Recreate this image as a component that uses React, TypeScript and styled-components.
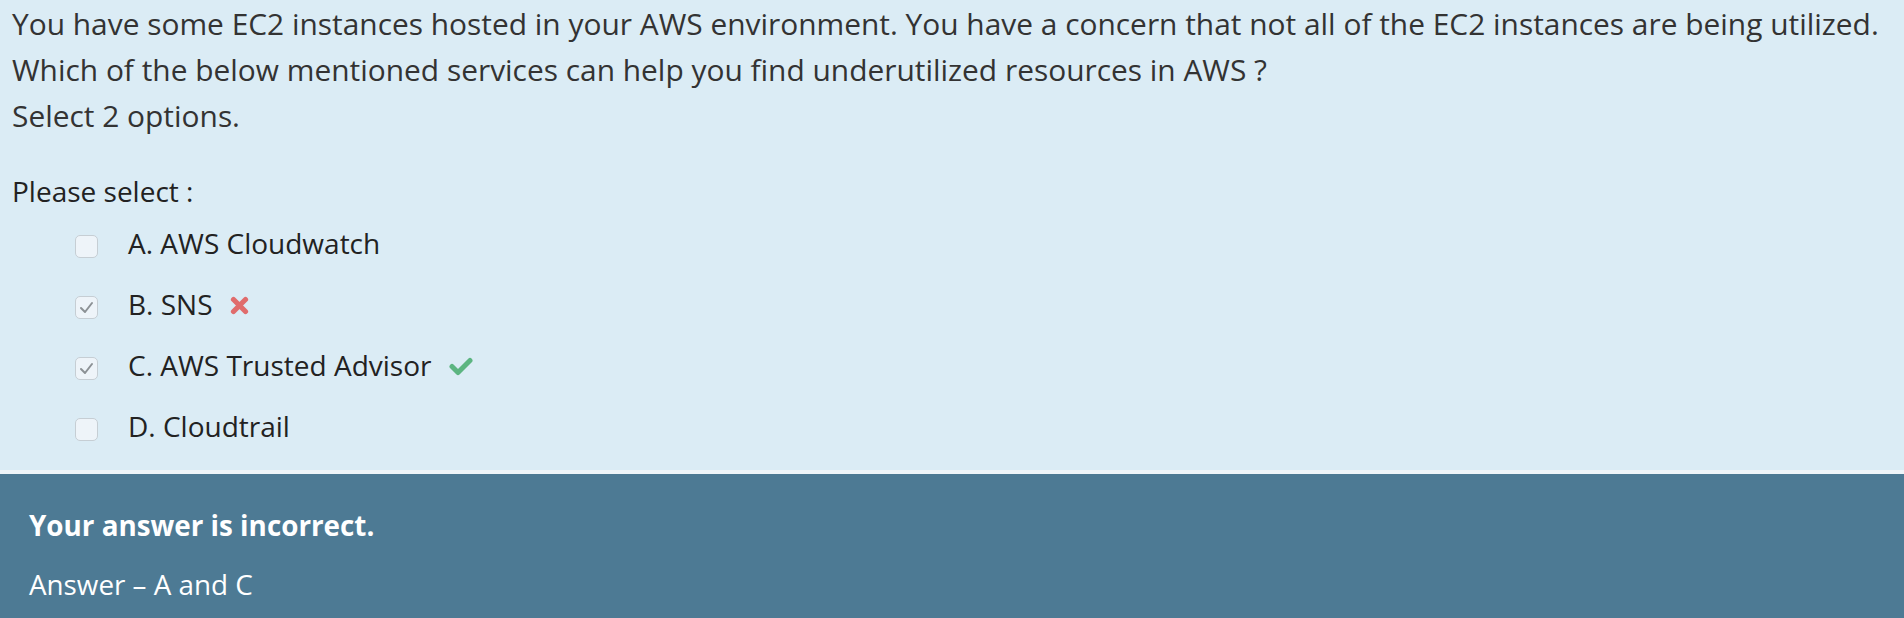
import styled, { createGlobalStyle } from 'styled-components';

const GlobalStyle = createGlobalStyle`
  body {
    margin: 0;
    background-color: #dbecf5;
    font-family: 'Open Sans', 'Noto Sans', sans-serif;
    color: #333333;
  }
`;

const QuestionPanel = styled.div`
  background-color: #dbecf5;
  padding: 1px 12px 21px 12px;
`;

const QuestionText = styled.div`
  font-size: 29.9px;
  line-height: 46px;
  white-space: nowrap;
`;

const SelectLabel = styled.div`
  font-size: 28px;
  line-height: 46px;
  margin-top: 29px;
  color: #222;
`;

const OptionList = styled.div`
  display: flex;
  flex-direction: column;
  gap: 15px;
  margin-top: 6px;
  padding-left: 63px;
`;

const OptionRow = styled.label`
  display: flex;
  align-items: flex-start;
  font-size: 28px;
  line-height: 46px;
  color: #222;
`;

const CheckBox = styled.span`
  box-sizing: border-box;
  width: 23px;
  height: 23px;
  margin-top: 15px;
  margin-right: 30px;
  border: 1px solid #c6ced4;
  border-radius: 5px;
  background-color: #eef4f9;
  display: flex;
  align-items: center;
  justify-content: center;
`;

const Mark = styled.span<{ kind: 'wrong' | 'right' }>`
  display: inline-flex;
  margin-left: ${(props) => (props.kind === 'wrong' ? '17px' : '18px')};
  margin-top: ${(props) => (props.kind === 'wrong' ? '15px' : '15px')};
  color: ${(props) => (props.kind === 'wrong' ? '#e06c6c' : '#5cb581')};
`;

const ResultPanel = styled.div`
  background-color: #4d7a94;
  border-top: 4px solid #eef5f9;
  padding: 28px 29px 24px 29px;
  color: #ffffff;
  font-size: 27.8px;
  line-height: 46px;
`;

const ResultTitle = styled.div`
  font-weight: 700;
`;

const ResultAnswer = styled.div`
  margin-top: 13px;
`;

const BoxTick = () => (
  <svg width="15" height="13" viewBox="0 0 15 13">
    <polyline points="2,7 6,11 13,2" fill="none" stroke="#8c9195" strokeWidth="2" strokeLinecap="round" strokeLinejoin="round" />
  </svg>
);

const CrossIcon = () => (
  <svg width="19" height="19" viewBox="0 0 19 19">
    <path d="M3.5 3.5 L15.5 15.5 M15.5 3.5 L3.5 15.5" stroke="currentColor" strokeWidth="5.2" strokeLinecap="round" />
  </svg>
);

const CheckIcon = () => (
  <svg width="24" height="19" viewBox="0 0 24 19">
    <path d="M3 9.5 L9 15.5 L21 3.5" fill="none" stroke="currentColor" strokeWidth="5" strokeLinecap="round" strokeLinejoin="round" />
  </svg>
);

type Option = {
  label: string;
  checked: boolean;
  mark?: 'wrong' | 'right';
};

const options: Option[] = [
  { label: 'A. AWS Cloudwatch', checked: false },
  { label: 'B. SNS', checked: true, mark: 'wrong' },
  { label: 'C. AWS Trusted Advisor', checked: true, mark: 'right' },
  { label: 'D. Cloudtrail', checked: false },
];

const App = () => {
  return (
    <>
      <GlobalStyle />
      <QuestionPanel>
        <QuestionText>
          You have some EC2 instances hosted in your AWS environment. You have a concern that not all of the EC2 instances are being utilized.
          <br />
          Which of the below mentioned services can help you find underutilized resources in AWS ?
          <br />
          Select 2 options.
        </QuestionText>
        <SelectLabel>Please select :</SelectLabel>
        <OptionList>
          {options.map((opt) => (
            <OptionRow key={opt.label}>
              <CheckBox>{opt.checked && <BoxTick />}</CheckBox>
              <span>{opt.label}</span>
              {opt.mark && <Mark kind={opt.mark}>{opt.mark === 'wrong' ? <CrossIcon /> : <CheckIcon />}</Mark>}
            </OptionRow>
          ))}
        </OptionList>
      </QuestionPanel>
      <ResultPanel>
        <ResultTitle>Your answer is incorrect.</ResultTitle>
        <ResultAnswer>Answer – A and C</ResultAnswer>
      </ResultPanel>
    </>
  );
};

export default App;
